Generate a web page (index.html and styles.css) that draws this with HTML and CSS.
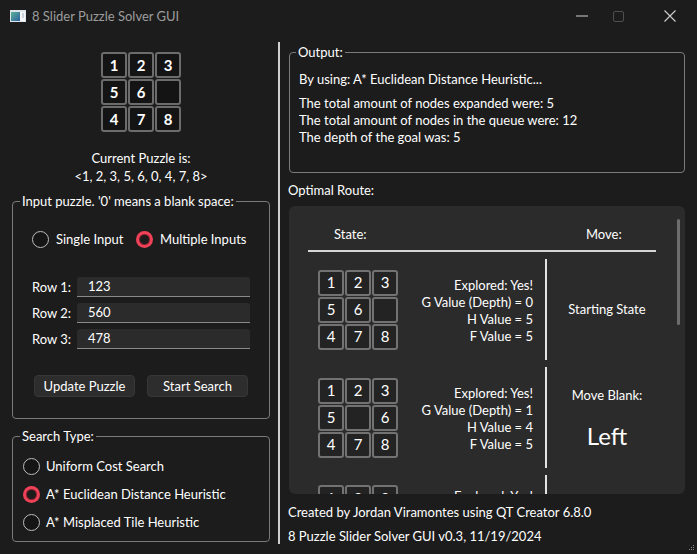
FILE: index.html
```html
<!DOCTYPE html>
<html>
<head>
<meta charset="utf-8">
<title>8 Slider Puzzle Solver GUI</title>
<link rel="stylesheet" href="styles.css">
</head>
<body>
<div class="window">
  <div class="titlebar">
    <svg class="app-icon" width="16" height="12" viewBox="0 0 16 12">
      <defs>
        <linearGradient id="ig" x1="0" y1="0" x2="1" y2="1">
          <stop offset="0" stop-color="#5fb39a"/>
          <stop offset="1" stop-color="#2b5f9e"/>
        </linearGradient>
      </defs>
      <rect x="0" y="0" width="16" height="12" fill="#dfe6ea"/>
      <rect x="1" y="2" width="9" height="9" fill="url(#ig)"/>
      <rect x="10" y="2" width="5" height="9" fill="#f4f6f7"/>
      <rect x="12" y="3" width="2" height="5" fill="#c9d3da"/>
    </svg>
    <span class="title">8 Slider Puzzle Solver GUI</span>
    <div class="controls">
      <svg class="ctl-min" width="12" height="2" viewBox="0 0 12 2"><rect x="0" y="0.5" width="12" height="1" fill="#d0d0d0"/></svg>
      <svg class="ctl-max" width="11" height="11" viewBox="0 0 11 11"><rect x="0.5" y="0.5" width="10" height="10" rx="1.5" fill="none" stroke="#4e4e4e"/></svg>
      <svg class="ctl-close" width="12" height="12" viewBox="0 0 12 12"><path d="M0.5 0.5 L11.5 11.5 M11.5 0.5 L0.5 11.5" stroke="#d0d0d0" stroke-width="1.1"/></svg>
    </div>
  </div>

  <div class="main">
    <div class="left">
      <div class="puzzle big">
        <div class="tile">1</div><div class="tile">2</div><div class="tile">3</div>
        <div class="tile">5</div><div class="tile">6</div><div class="tile"></div>
        <div class="tile">4</div><div class="tile">7</div><div class="tile">8</div>
      </div>
      <div class="current">Current Puzzle is:<br>&lt;1, 2, 3, 5, 6, 0, 4, 7, 8&gt;</div>

      <fieldset class="group input-group">
        <legend>Input puzzle. '0' means a blank space:</legend>
        <div class="input-body">
          <div class="radio-row">
            <div class="radio"><span class="dot"></span>Single Input</div>
            <div class="radio checked"><span class="dot"></span>Multiple Inputs</div>
          </div>
          <div class="rows">
            <div class="row"><span class="row-label">Row 1:</span><span class="edit">123</span></div>
            <div class="row"><span class="row-label">Row 2:</span><span class="edit">560</span></div>
            <div class="row"><span class="row-label">Row 3:</span><span class="edit">478</span></div>
          </div>
          <div class="buttons">
            <button class="btn">Update Puzzle</button>
            <button class="btn">Start Search</button>
          </div>
        </div>
      </fieldset>

      <fieldset class="group search-group">
        <legend>Search Type:</legend>
        <div class="search-body">
          <div class="radio"><span class="dot"></span>Uniform Cost Search</div>
          <div class="radio checked"><span class="dot"></span>A* Euclidean Distance Heuristic</div>
          <div class="radio"><span class="dot"></span>A* Misplaced Tile Heuristic</div>
        </div>
      </fieldset>
    </div>

    <div class="divider"></div>

    <div class="right">
      <fieldset class="group output-group">
        <legend>Output:</legend>
        <div class="output-body">
          <p class="out-line">By using: A* Euclidean Distance Heuristic...</p>
          <p class="out-block">The total amount of nodes expanded were: 5<br>The total amount of nodes in the queue were: 12<br>The depth of the goal was: 5</p>
        </div>
      </fieldset>

      <div class="route-label">Optimal Route:</div>

      <div class="scroll">
        <div class="scroll-content">
          <div class="route-head"><span class="h-state">State:</span><span class="h-move">Move:</span></div>
          <div class="route-rule"></div>

          <div class="route-row">
            <div class="puzzle small">
              <div class="tile">1</div><div class="tile">2</div><div class="tile">3</div>
              <div class="tile">5</div><div class="tile">6</div><div class="tile"></div>
              <div class="tile">4</div><div class="tile">7</div><div class="tile">8</div>
            </div>
            <div class="info">Explored: Yes!<br>G Value (Depth) = 0<br>H Value = 5<br>F Value = 5</div>
            <div class="vline"></div>
            <div class="move"><span>Starting State</span></div>
          </div>

          <div class="route-row">
            <div class="puzzle small">
              <div class="tile">1</div><div class="tile">2</div><div class="tile">3</div>
              <div class="tile">5</div><div class="tile"></div><div class="tile">6</div>
              <div class="tile">4</div><div class="tile">7</div><div class="tile">8</div>
            </div>
            <div class="info">Explored: Yes!<br>G Value (Depth) = 1<br>H Value = 4<br>F Value = 5</div>
            <div class="vline"></div>
            <div class="move move-split"><span>Move Blank:</span><span class="dir">Left</span></div>
          </div>

          <div class="route-row partial">
            <div class="puzzle small">
              <div class="tile">1</div><div class="tile">2</div><div class="tile">3</div>
            </div>
            <div class="info">Explored: Yes!</div>
            <div class="vline"></div>
            <div class="move"></div>
          </div>
        </div>
        <div class="scrollbar"></div>
      </div>

      <div class="footer-line first">Created by Jordan Viramontes using QT Creator 6.8.0</div>
      <div class="footer-line">8 Puzzle Slider Solver GUI v0.3, 11/19/2024</div>
    </div>
  </div>

  <svg class="grip" width="6" height="6" viewBox="0 0 6 6">
    <rect x="4" y="0" width="1" height="1" fill="#8a8a8a"/>
    <rect x="2" y="2" width="1" height="1" fill="#8a8a8a"/>
    <rect x="4" y="2" width="1" height="1" fill="#8a8a8a"/>
    <rect x="0" y="4" width="1" height="1" fill="#8a8a8a"/>
    <rect x="2" y="4" width="1" height="1" fill="#8a8a8a"/>
    <rect x="4" y="4" width="1" height="1" fill="#8a8a8a"/>
  </svg>
</div>
</body>
</html>
```

FILE: styles.css
```css
* { box-sizing: border-box; }
html, body { margin: 0; padding: 0; }
body {
  width: 697px;
  height: 554px;
  overflow: hidden;
  background: #1c1c1c;
  color: #ffffff;
  font-family: Lato, "Open Sans", sans-serif;
  font-size: 13px;
  line-height: 17px;
}
.window {
  position: relative;
  width: 697px;
  height: 554px;
  display: flex;
  flex-direction: column;
}

/* title bar */
.titlebar {
  height: 32px;
  flex: none;
  display: flex;
  align-items: center;
  padding-left: 10px;
}
.app-icon { margin-right: 6px; flex: none; }
.title { color: #9c9c9c; font-size: 13px; }
.controls {
  margin-left: auto;
  display: flex;
  align-items: center;
  padding-right: 21px;
}
.ctl-min { margin-right: 25px; }
.ctl-max { margin-right: 40px; }

/* main area */
.main {
  flex: 1;
  display: flex;
  min-height: 0;
}
.left {
  width: 278px;
  flex: none;
  display: flex;
  flex-direction: column;
  padding: 20px 8px 0 12px;
}
.divider {
  width: 2px;
  flex: none;
  background: #cfcfcf;
  margin: 10px 0;
}
.right {
  flex: 1;
  display: flex;
  flex-direction: column;
  padding: 12px 12px 0 8px;
  min-width: 0;
}

/* puzzles */
.puzzle {
  display: grid;
  grid-template-columns: repeat(3, 26px);
  grid-auto-rows: 26px;
  gap: 1px;
  flex: none;
}
.puzzle.big { align-self: center; }
.tile {
  border: 2px solid #6c6c6c;
  border-radius: 3px;
  display: flex;
  align-items: center;
  justify-content: center;
  font-size: 15px;
  line-height: 1;
  color: #ffffff;
}
.big .tile {
  background: #141414;
  font-weight: 700;
}
.small .tile {
  background: #232323;
  border-color: #727272;
  font-weight: 400;
}

.current {
  text-align: center;
  margin-top: 17px;
  line-height: 18px;
}

/* group boxes */
.group {
  margin: 0;
  padding: 0;
  min-width: 0;
  border: 1px solid #7a7a7a;
  border-radius: 4px;
}
.group legend {
  margin-left: 7px;
  padding: 0 2px;
  line-height: 16px;
  color: #ffffff;
}
.input-group { margin-top: 8px; height: 226px; }
.input-body { padding: 22px 19px 0 19px; }
.radio-row {
  display: grid;
  grid-template-columns: 104px auto;
}
.radio {
  display: flex;
  align-items: center;
  gap: 7px;
  height: 17px;
  white-space: nowrap;
}
.dot {
  width: 17px;
  height: 17px;
  flex: none;
  border-radius: 50%;
  border: 1.5px solid #bdbdbd;
  background: #151515;
  display: flex;
  align-items: center;
  justify-content: center;
}
.checked .dot {
  border: none;
  background: #ef4258;
}
.checked .dot::after {
  content: "";
  width: 9px;
  height: 9px;
  border-radius: 50%;
  background: #1c1c1c;
  box-shadow: 0 0 0 1px #7d1e2b;
}

.rows {
  margin-top: 29px;
  display: flex;
  flex-direction: column;
  gap: 6px;
}
.row {
  display: flex;
  align-items: center;
  height: 20px;
}
.row-label { width: 45px; flex: none; }
.edit {
  flex: 1;
  height: 20px;
  background: #2b2b2b;
  border-bottom: 1px solid #8a8a8a;
  border-radius: 3px 3px 0 0;
  padding-left: 11px;
  line-height: 19px;
}
.buttons {
  margin-top: 26px;
  display: flex;
  gap: 12px;
  padding-left: 2px;
}
.btn {
  width: 101px;
  height: 22px;
  padding: 0;
  background: #2d2d2d;
  border: 1px solid #373737;
  border-radius: 4px;
  color: #ffffff;
  font-family: inherit;
  font-size: 13px;
  line-height: 20px;
}

.search-group { margin-top: 9px; height: 114px; }
.search-body {
  padding: 14px 10px 0 10px;
  display: flex;
  flex-direction: column;
  gap: 11px;
}
.search-body .radio { gap: 6px; }

/* output */
.output-group { margin-left: 1px; }
.output-group legend { margin-left: 6px; padding: 0 2px; }
.output-body { padding: 11px 9px 26px 9px; }
.out-line { margin: 0; }
.out-block { margin: 7px 0 0 0; }

.route-label { margin-top: 9px; }

/* scroll area */
.scroll {
  margin-top: 7px;
  margin-left: 1px;
  height: 288px;
  flex: none;
  background: #2b2b2b;
  border-radius: 6px;
  overflow: hidden;
  display: flex;
}
.scroll-content {
  flex: 1;
  padding: 20px 0 0 19px;
  min-width: 0;
  overflow: hidden;
}
.route-head {
  display: flex;
  height: 17px;
}
.h-state { width: 278px; padding-left: 26px; }
.route-rule {
  width: 348px;
  height: 2px;
  background: #d6d6d6;
  margin-top: 7px;
}
.route-row {
  width: 359px;
  height: 101px;
  margin-top: 7px;
  display: flex;
  align-items: center;
}
.route-row.partial {
  height: 19px;
  align-items: flex-start;
  overflow: hidden;
}
.small { margin-left: 10px; }
.partial .small { margin-top: 10px; }
.info {
  flex: 1;
  text-align: right;
  padding-right: 12px;
  padding-top: 2px;
}
.partial .info { padding-top: 13px; }
.vline {
  width: 2px;
  height: 101px;
  background: #e2e2e2;
  flex: none;
}
.move {
  width: 120px;
  flex: none;
  display: flex;
  flex-direction: column;
  align-items: center;
  justify-content: center;
}
.move-split { gap: 16px; padding-top: 3px; }
.dir { font-size: 24px; line-height: 32px; }
.scrollbar {
  width: 3px;
  height: 106px;
  margin: 13px 5px 0 0;
  background: #6d6d6d;
  border-radius: 2px;
  flex: none;
}

.footer-line { margin-top: 7px; }
.footer-line.first { margin-top: 10px; }

.grip {
  position: absolute;
  right: 2px;
  bottom: 3px;
}
```
